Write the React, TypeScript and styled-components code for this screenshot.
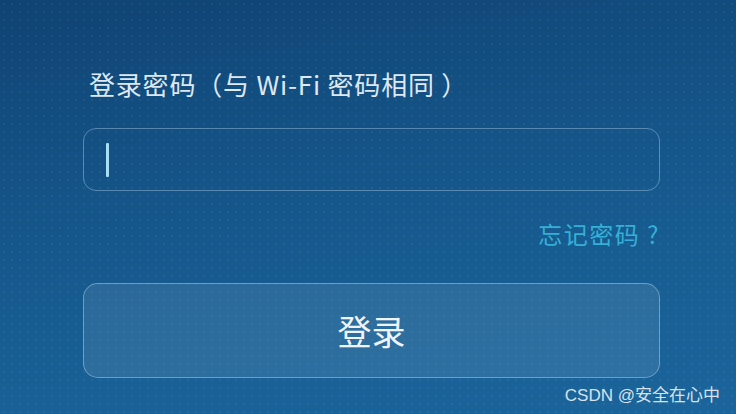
import React from 'react'
import styled, { createGlobalStyle } from 'styled-components'

const GlobalStyle = createGlobalStyle`
  html, body {
    margin: 0;
    padding: 0;
  }
  body {
    font-family: "Noto Sans CJK SC", "Noto Sans", sans-serif;
  }
`

const Page = styled.div`
  position: relative;
  width: 736px;
  height: 414px;
  overflow: hidden;
  box-sizing: border-box;
  padding: 66px 76px 0 83px;
  background-color: #155589;
  background-image: radial-gradient(rgba(255, 255, 255, 0.05) 1px, transparent 1.5px),
    linear-gradient(172deg, #0f4373 0%, #145285 35%, #175d92 65%, #1b659c 100%);
  background-size: 8px 8px, 100% 100%;
`

const Form = styled.div`
  display: flex;
  flex-direction: column;
  width: 577px;
`

const Label = styled.div`
  padding-left: 6px;
  font-size: 26px;
  line-height: 36px;
  color: #dde8f1;
  letter-spacing: 0.8px;
  white-space: nowrap;
`

const Field = styled.div`
  margin-top: 26px;
  height: 63px;
  box-sizing: border-box;
  border: 1.5px solid rgba(180, 210, 235, 0.42);
  border-radius: 13px;
  display: flex;
  align-items: center;
  padding-left: 22px;
`

const Caret = styled.span`
  width: 3px;
  height: 34px;
  border-radius: 1px;
  background: #a9dcf6;
`

const Forgot = styled.a`
  align-self: flex-end;
  margin-top: 27px;
  margin-right: 0;
  font-size: 24px;
  line-height: 32px;
  letter-spacing: 1.5px;
  color: #35afd5;
  text-decoration: none;
`

const LoginButton = styled.button`
  margin-top: 33px;
  height: 95px;
  box-sizing: border-box;
  border: 1.5px solid rgba(190, 215, 238, 0.45);
  border-radius: 15px;
  background: rgba(255, 255, 255, 0.09);
  color: #eef4f9;
  font-family: "Noto Sans CJK SC", "Noto Sans", sans-serif;
  font-size: 34px;
  padding: 0;
  cursor: pointer;
`

const Watermark = styled.div`
  position: absolute;
  right: 16px;
  bottom: 8px;
  font-family: "Liberation Sans", "Noto Sans CJK SC", sans-serif;
  font-size: 17px;
  color: #d7e1ea;
`

const App = () => {
  return (
    <>
      <GlobalStyle />
      <Page>
        <Form>
          <Label>登录密码（与 Wi-Fi 密码相同 ）</Label>
          <Field>
            <Caret />
          </Field>
          <Forgot href="#">忘记密码 ?</Forgot>
          <LoginButton>登录</LoginButton>
        </Form>
        <Watermark>CSDN @安全在心中</Watermark>
      </Page>
    </>
  )
}

export default App
